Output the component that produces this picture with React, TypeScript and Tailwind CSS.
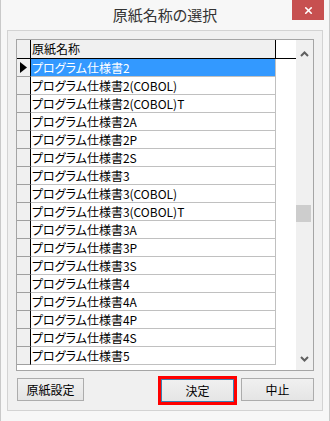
import { X } from "lucide-react";
import clsx from "clsx";

const ROWS = [
  "プログラム仕様書2",
  "プログラム仕様書2(COBOL)",
  "プログラム仕様書2(COBOL)T",
  "プログラム仕様書2A",
  "プログラム仕様書2P",
  "プログラム仕様書2S",
  "プログラム仕様書3",
  "プログラム仕様書3(COBOL)",
  "プログラム仕様書3(COBOL)T",
  "プログラム仕様書3A",
  "プログラム仕様書3P",
  "プログラム仕様書3S",
  "プログラム仕様書4",
  "プログラム仕様書4A",
  "プログラム仕様書4P",
  "プログラム仕様書4S",
  "プログラム仕様書5",
];

const FONT = "font-['Noto_Sans_CJK_JP',sans-serif] [font-feature-settings:'palt']";

function Chevron({ up }: { up?: boolean }) {
  return (
    <svg width="9" height="6" viewBox="0 0 9 6" className="block">
      <path
        d={up ? "M1 5 L4.5 1.5 L8 5" : "M1 1 L4.5 4.5 L8 1"}
        fill="none"
        stroke="#606060"
        strokeWidth="2"
      />
    </svg>
  );
}

function Button({ label, focused, className }: { label: string; focused?: boolean; className?: string }) {
  return (
    <button
      className={clsx(
        "flex h-[23px] items-center justify-center border bg-gradient-to-b from-[#f0f0f0] to-[#e5e5e5] text-[12px] text-black",
        focused ? "border-[#3c7fb1] outline-[3px] outline-solid outline-[#ff0000]" : "border-[#acacac]",
        className,
      )}
    >
      {label}
    </button>
  );
}

export default function App() {
  return (
    <div className={clsx("relative h-[421px] w-[330px] border-x border-[#c9c9c9] bg-[#f7f7f7]", FONT)}>
      {/* title bar */}
      <div className="flex h-[30px] items-center justify-center pt-[1px] text-[15px] text-[#333]">
        原紙名称の選択
      </div>
      <div className="absolute right-[5px] top-0 flex h-[20px] w-[32px] items-center justify-center bg-[#c75050]">
        <X size={11} strokeWidth={3.5} color="#fff" />
      </div>

      {/* panel */}
      <div className="ml-[6px] flex h-[381px] w-[316px] flex-col border border-[#d3d3d3] bg-[#f0f0f0] p-2">
        {/* grid */}
        <div className="flex h-[336px] w-[298px] border border-[#a5a5a5] bg-white">
          <div className="flex w-[279px] flex-col">
            <div className="flex h-[19px] border-b border-black">
              <div className="w-[14px] border-r border-black bg-[#f0f0f0]" />
              <div className="flex w-[245px] items-center border-r border-black bg-[#f0f0f0] pl-[1px] text-[12px] leading-none text-black">
                原紙名称
              </div>
            </div>
            {ROWS.map((r, i) => (
              <div key={r} className="flex h-[18px]">
                <div className="flex w-[14px] items-center justify-center border-r border-b border-r-black border-b-[#a0a0a0] bg-[#f0f0f0]">
                  {i === 0 && (
                    <svg width="7" height="11" viewBox="0 0 7 11">
                      <path d="M0 0 L7 5.5 L0 11 Z" fill="#000" />
                    </svg>
                  )}
                </div>
                <div
                  className={clsx(
                    "flex w-[245px] items-center border-b border-r border-[#c0c0c0] pl-[1px] text-[12px] leading-none",
                    i === 0 ? "bg-[#3399ff] text-white" : "bg-white text-black",
                  )}
                >
                  {r}
                </div>
              </div>
            ))}
          </div>
          {/* scrollbar */}
          <div className="ml-auto flex w-[17px] flex-col items-center bg-[#f0f0f0]">
            <div className="flex h-[17px] items-end justify-center pt-[6px]">
              <Chevron up />
            </div>
            <div className="relative w-full flex-1">
              <div className="absolute left-0 top-[148px] h-[17px] w-[15px] bg-[#cdcdcd]" />
            </div>
            <div className="flex h-[17px] items-start justify-center pt-[3px]">
              <Chevron />
            </div>
          </div>
        </div>

        {/* buttons */}
        <div className="mt-[7px] flex w-[298px] items-start">
          <Button label="原紙設定" className="ml-[1px] w-[67px]" />
          <Button label="決定" focused className="ml-auto mt-[1px] w-[73px]" />
          <Button label="中止" className="ml-[7px] w-[73px]" />
        </div>
      </div>
    </div>
  );
}
